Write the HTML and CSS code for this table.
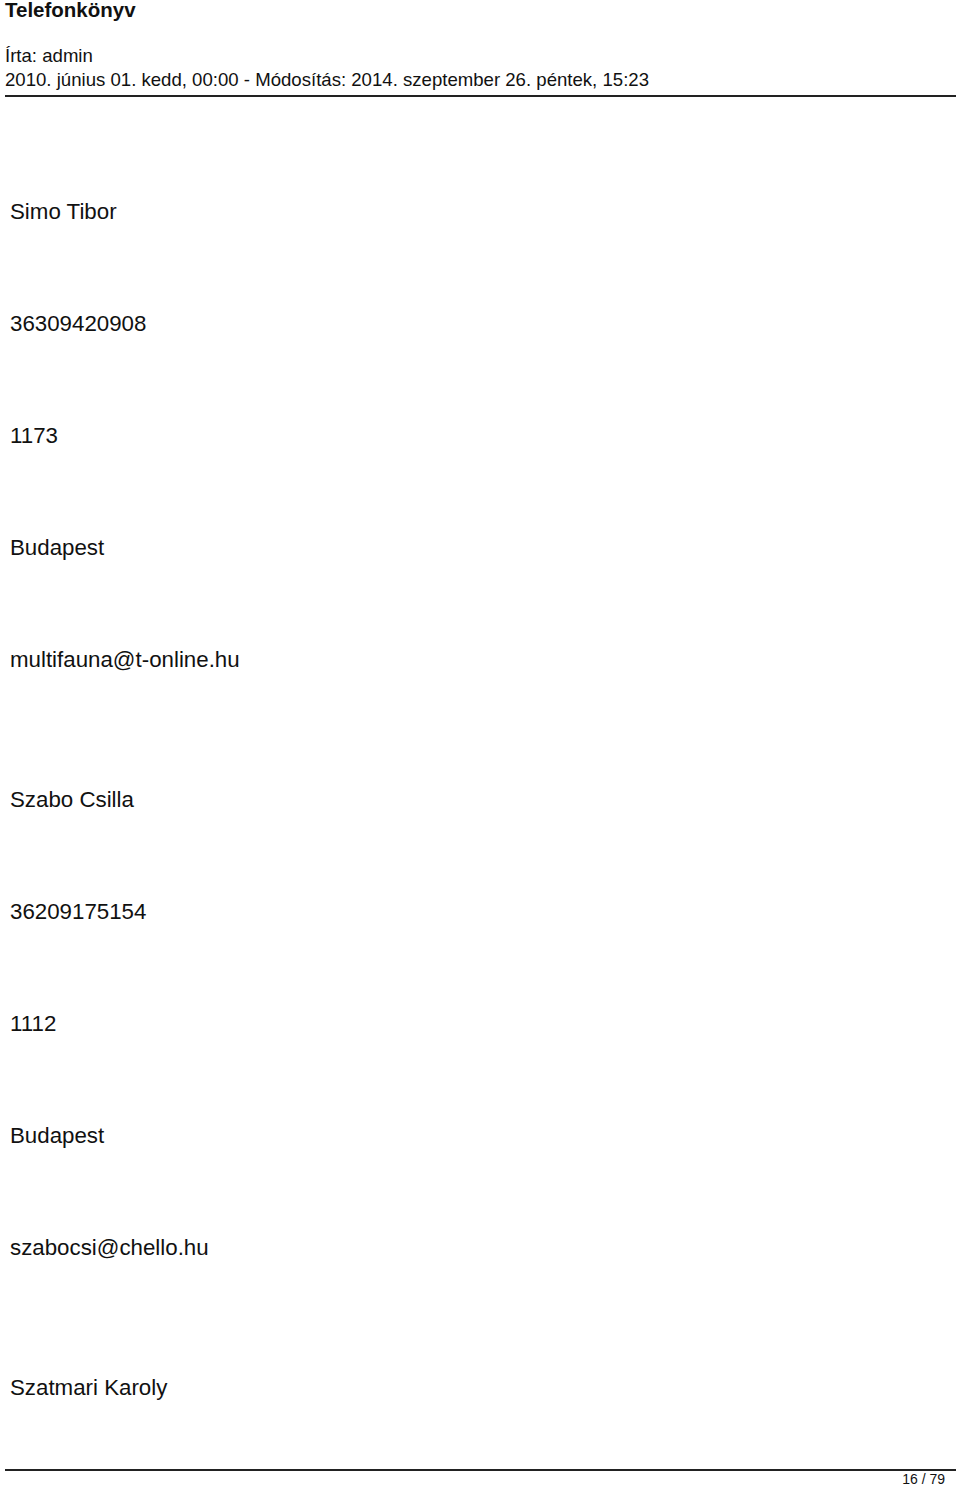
FILE: index.html
```html
<!DOCTYPE html>
<html lang="hu">
<head>
<meta charset="utf-8">
<title>Telefonkönyv</title>
<link rel="stylesheet" href="styles.css">
</head>
<body>
<header class="head">
  <h1 class="title">Telefonkönyv</h1>
  <div class="meta">
    <div class="meta-line">Írta: admin</div>
    <div class="meta-line">2010. június 01. kedd, 00:00 - Módosítás: 2014. szeptember 26. péntek, 15:23</div>
  </div>
</header>
<hr class="rule">
<main class="content">
  <section class="entry">
    <p class="field">Simo Tibor</p>
    <p class="field">36309420908</p>
    <p class="field">1173</p>
    <p class="field">Budapest</p>
    <p class="field">multifauna@t-online.hu</p>
  </section>
  <section class="entry">
    <p class="field">Szabo Csilla</p>
    <p class="field">36209175154</p>
    <p class="field">1112</p>
    <p class="field">Budapest</p>
    <p class="field">szabocsi@chello.hu</p>
  </section>
  <section class="entry">
    <p class="field">Szatmari Karoly</p>
  </section>
</main>
<footer class="foot">
  <hr class="rule foot-rule">
  <div class="pager">16 / 79</div>
</footer>
</body>
</html>
```

FILE: styles.css
```css
html, body {
  margin: 0;
  padding: 0;
  background: #fff;
}
body {
  font-family: "Liberation Sans", Arial, Helvetica, sans-serif;
  color: #111;
  width: 960px;
}
.head {
  padding-left: 5px;
}
.title {
  margin: 0;
  font-size: 20.5px;
  line-height: 20px;
  font-weight: bold;
}
.meta {
  margin-top: 24px;
  font-size: 18.6px;
  line-height: 24px;
}
.rule {
  margin: 3px 4px 0 5px;
  border: 0;
  height: 2px;
  background: #222;
}
.content {
  margin-top: 103px;
  padding-left: 10px;
  display: flex;
  flex-direction: column;
  gap: 116px;
}
.entry {
  display: flex;
  flex-direction: column;
  gap: 88px;
}
.field {
  margin: 0;
  font-size: 22.3px;
  line-height: 24px;
}
.foot {
  margin-top: 69px;
}
.foot-rule {
  margin-top: 0;
}
.pager {
  text-align: right;
  padding-right: 15px;
  font-size: 14px;
  line-height: 16px;
}
```
